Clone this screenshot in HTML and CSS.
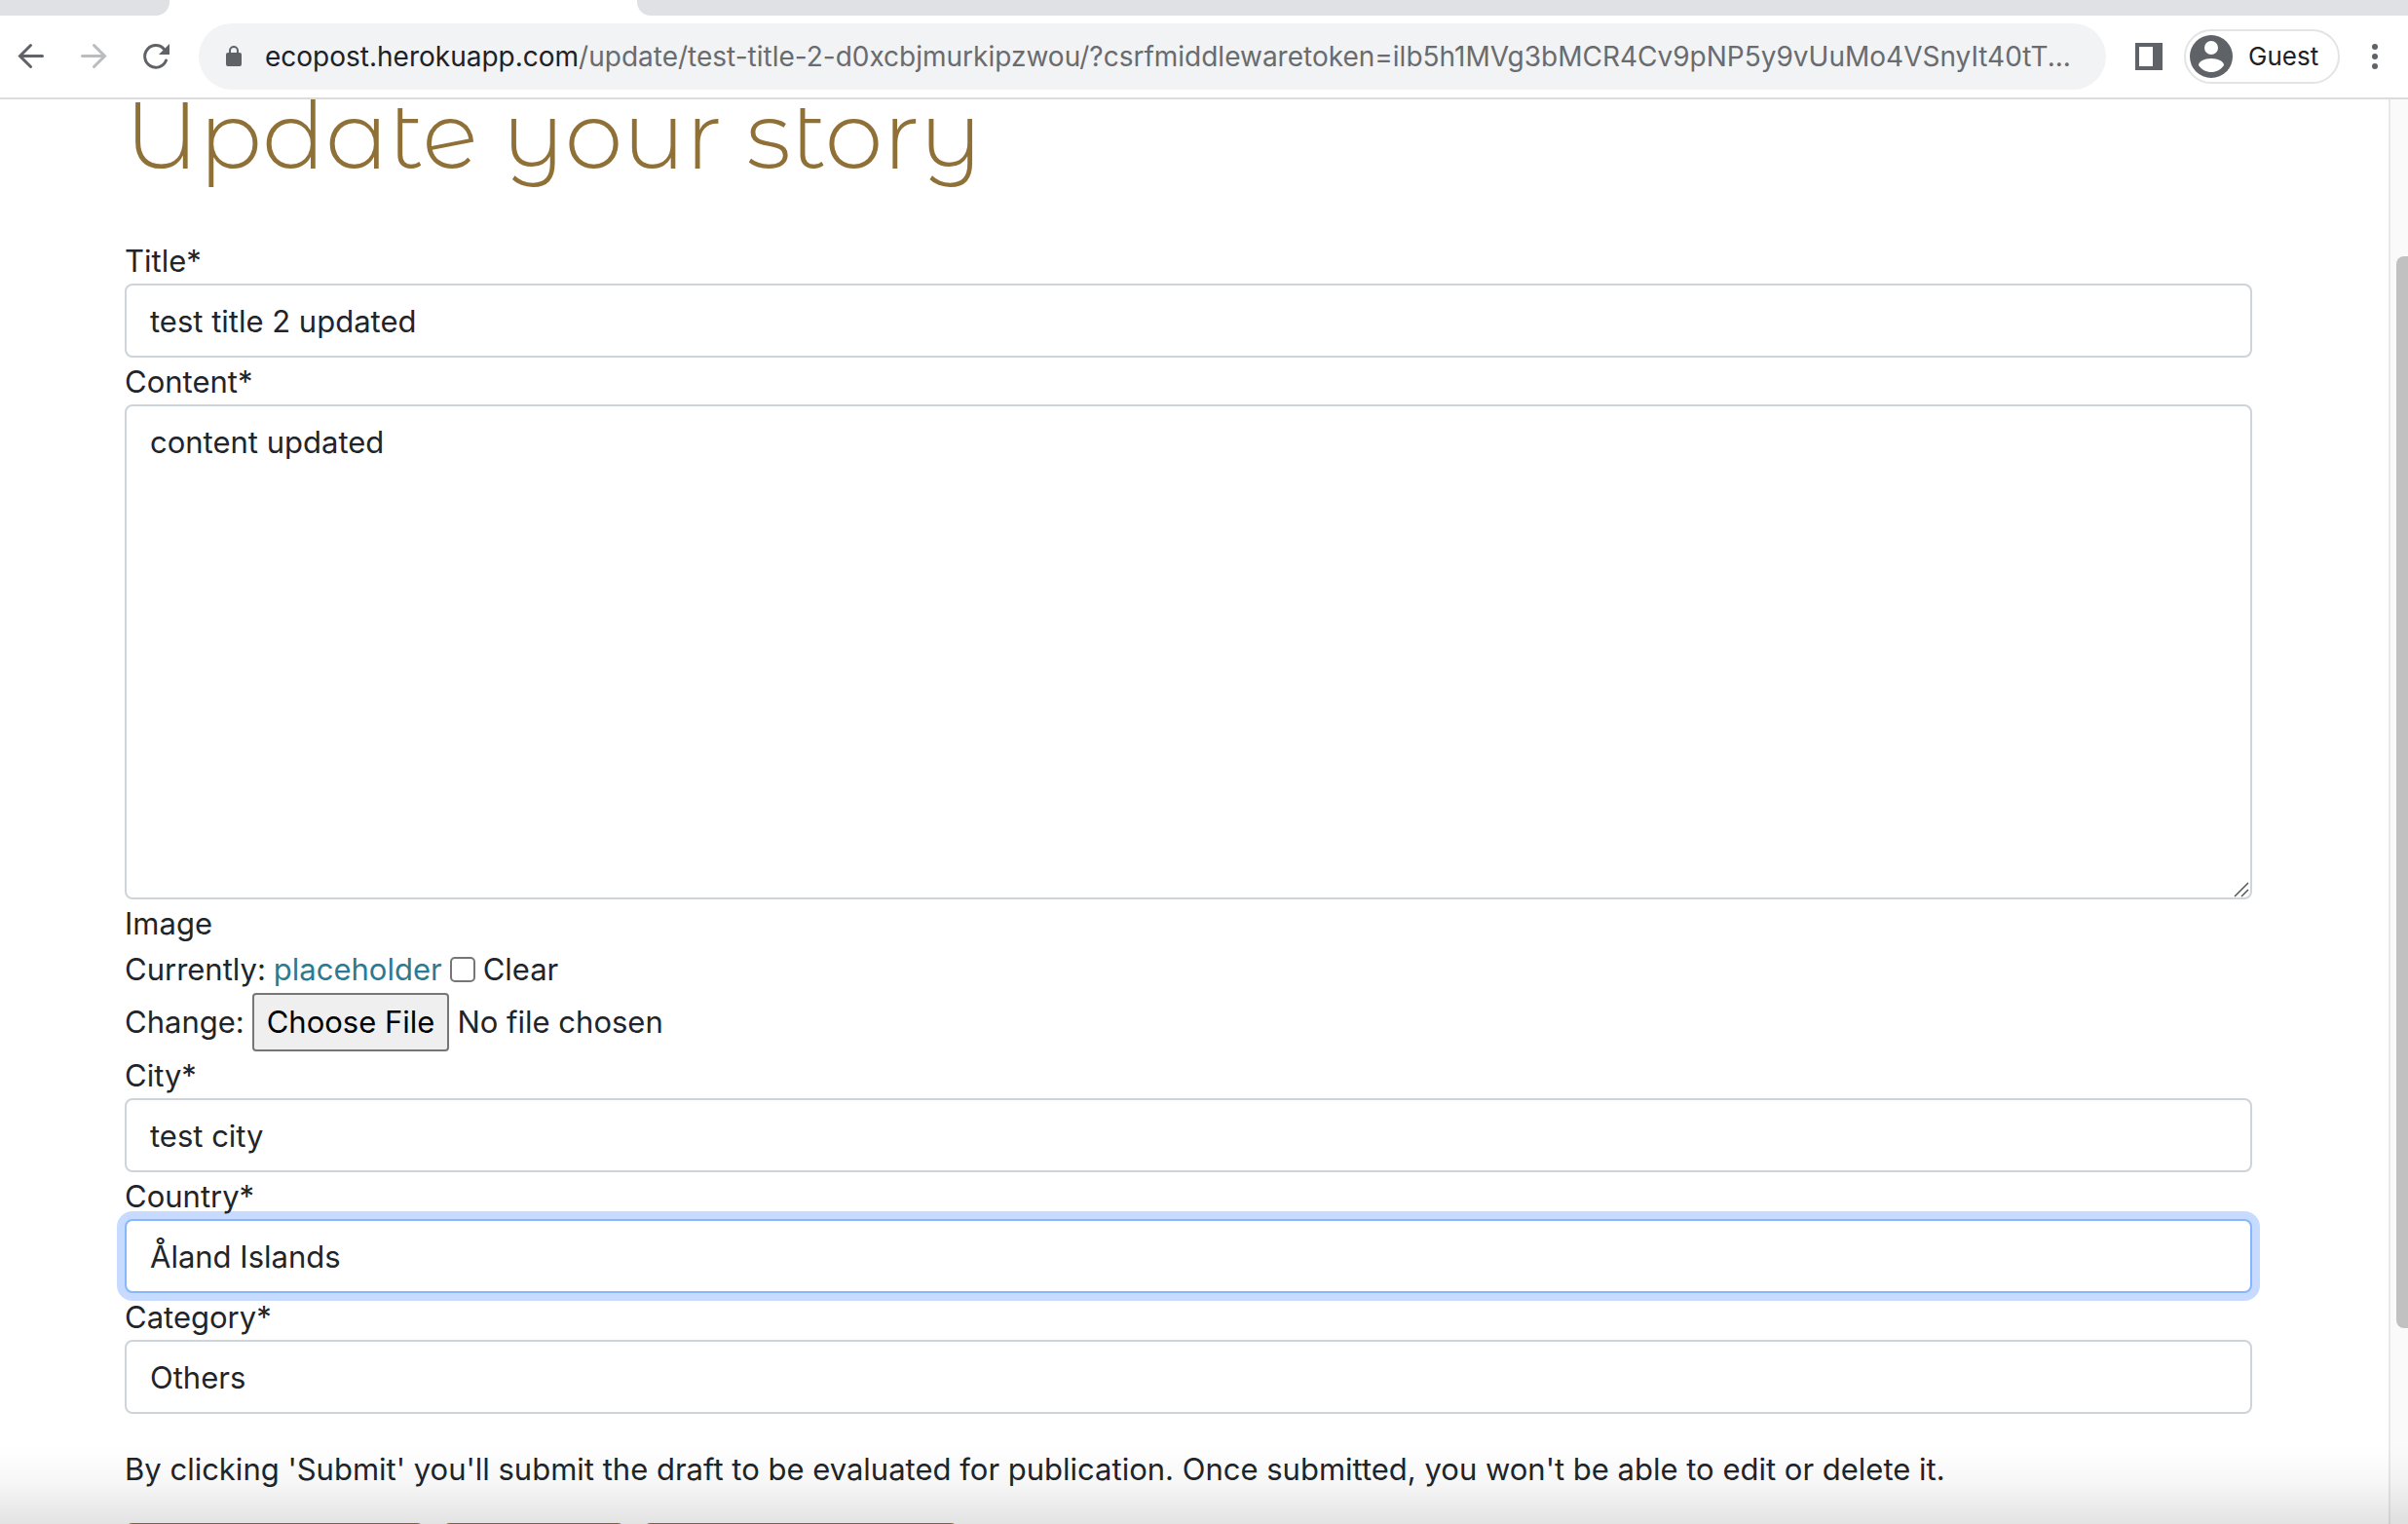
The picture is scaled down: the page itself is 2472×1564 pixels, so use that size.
FILE: index.html
```html
<!DOCTYPE html>
<html lang="en">
<head>
<meta charset="utf-8">
<title>Update your story</title>
<link rel="stylesheet" href="styles.css">
</head>
<body>
<div class="window">
  <header class="chrome">
    <div class="tabstrip"><span class="tab tab-left"></span><span class="tab tab-right"></span></div>
    <div class="toolbar">
      <nav class="nav">
        <button class="icon-button" type="button" aria-label="Back">
          <svg width="32" height="32" viewBox="0 0 32 32" fill="none" stroke="#5f6368" stroke-width="3" stroke-linecap="round"><path d="M27.500 15.500H5M15.500 4.500L4.500 15.500L15.500 26.500"/></svg>
        </button>
        <button class="icon-button" type="button" aria-label="Forward">
          <svg width="32" height="32" viewBox="0 0 32 32" fill="none" stroke="#babcbe" stroke-width="3" stroke-linecap="round"><path d="M4.500 15.500H27M16.500 4.500L27.500 15.500L16.500 26.500"/></svg>
        </button>
        <button class="icon-button" type="button" aria-label="Reload">
          <svg width="32" height="32" viewBox="0 0 32 32"><path d="M26.500 20A11.300 11.300 0 1 1 24.500 8.500" fill="none" stroke="#5f6368" stroke-width="3" stroke-linecap="round"/><path d="M30 3V14H19Z" fill="#5f6368"/></svg>
        </button>
      </nav>
      <div class="omnibox">
        <svg width="18" height="24" viewBox="0 0 18 24"><rect x="1" y="8" width="16" height="14" rx="2" fill="#5f6368"/><path d="M5 9V6a4 4 0 0 1 8 0V9" fill="none" stroke="#5f6368" stroke-width="2"/></svg>
        <span class="url"><span class="host">ecopost.herokuapp.com</span>/update/test-title-2-d0xcbjmurkipzwou/?csrfmiddlewaretoken=ilb5h1MVg3bMCR4Cv9pNP5y9vUuMo4VSnyIt40tT...</span>
      </div>
      <div class="actions">
        <button class="icon-button" type="button" aria-label="Side panel">
          <svg width="28" height="28" viewBox="0 0 28 28"><path fill="#5f6368" fill-rule="evenodd" d="M0 0H28V28H0ZM4 4V24H18V4Z"/></svg>
        </button>
        <button class="profile" type="button">
          <svg width="44" height="44" viewBox="0 0 44 44"><circle cx="22" cy="22" r="22" fill="#5f6368"/><circle cx="22" cy="13" r="7" fill="#fff"/><path d="M9 31C9 27 15 24 22 24S35 27 35 31C32 35.500 27 38 22 38S12 35.500 9 31Z" fill="#fff"/></svg>
          <span>Guest</span>
        </button>
        <button class="icon-button" type="button" aria-label="Menu">
          <svg width="8" height="28" viewBox="0 0 8 28" fill="#5f6368"><circle cx="4" cy="4" r="3"/><circle cx="4" cy="14" r="3"/><circle cx="4" cy="24" r="3"/></svg>
        </button>
      </div>
    </div>
  </header>
  <div class="viewport">
    <main class="page">
      <h1 class="heading">Update your story</h1>
      <form class="form">
        <label for="title">Title*</label>
        <input class="control" id="title" type="text" value="test title 2 updated">
        <label for="content">Content*</label>
        <div class="area">
          <textarea class="control" id="content" rows="10">content updated</textarea>
          <svg class="grip" width="16" height="16" viewBox="0 0 16 16" fill="none" stroke="#555" stroke-width="1.500"><path d="M1 15L15 1M8 15L15 8"/></svg>
        </div>
        <label for="image">Image</label>
        <div class="line">Currently: <a class="link" href="#">placeholder</a> <input class="check" id="clear" type="checkbox"> <label for="clear">Clear</label></div>
        <div class="line">Change: <input class="file" id="image" type="file"></div>
        <label for="city">City*</label>
        <input class="control" id="city" type="text" value="test city">
        <label for="country">Country*</label>
        <select class="control active" id="country"><option>Åland Islands</option></select>
        <label for="category">Category*</label>
        <select class="control" id="category"><option>Others</option></select>
        <p class="note">By clicking 'Submit' you'll submit the draft to be evaluated for publication. Once submitted, you won't be able to edit or delete it.</p>
        <div class="buttons">
          <button class="btn btn-save" type="button" aria-label="Save draft"></button>
          <button class="btn btn-submit" type="button" aria-label="Submit"></button>
          <button class="btn btn-cancel" type="button" aria-label="Cancel"></button>
        </div>
      </form>
    </main>
    <div class="scrollbar"><div class="thumb"></div></div>
    <div class="shade"></div>
  </div>
</div>
</body>
</html>
```
FILE: styles.css
```css
* { box-sizing: border-box; }
body {
  margin: 0;
  background: #fff;
  color: #212529;
  font-family: Inter, "Liberation Sans", sans-serif;
  font-size: 31px;
  line-height: 48px;
}
button, input, select, textarea { font: inherit; color: inherit; }
svg { display: block; flex: none; }

.window { display: flex; flex-direction: column; height: 100vh; overflow: hidden; }

.chrome { flex: none; border-bottom: 2px solid #dcdcdc; }
.tabstrip { display: flex; gap: 480px; height: 16px; }
.tab { background: #dfe1e5; }
.tab-left { width: 174px; border-bottom-right-radius: 14px; }
.tab-right { flex: 1; border-bottom-left-radius: 14px; }
.toolbar { display: flex; align-items: center; gap: 28px; height: 84px; padding: 0 30px 0 16px; }
.nav { display: flex; gap: 32px; }
.icon-button { padding: 0; border: 0; background: none; }
.omnibox {
  display: flex;
  flex: 1;
  align-items: center;
  gap: 23px;
  min-width: 0;
  height: 68px;
  padding: 0 28px 0 27px;
  border-radius: 34px;
  background: #f1f3f4;
}
.url { overflow: hidden; white-space: nowrap; color: #696b6e; font-size: 28px; }
.host { color: #202124; }
.actions { display: flex; align-items: center; gap: 22px; margin-left: 2px; }
.actions .icon-button:last-child { margin-left: 10px; }
.profile {
  display: flex;
  align-items: center;
  gap: 16px;
  width: 160px;
  height: 56px;
  padding: 0 4px;
  border: 2px solid #e3e4e5;
  border-radius: 28px;
  background: #fff;
  color: #202124;
  font-size: 26px;
}

.viewport { position: relative; display: flex; flex: 1; min-height: 0; overflow: hidden; }
.page { flex: 1; min-width: 0; padding: 0 140px 0 128px; }
.heading {
  margin: -20px 0 48px;
  color: #8f7037;
  font-family: "Montserrat Alternates", Inter, sans-serif;
  font-size: 96px;
  font-weight: 300;
  line-height: 113px;
  white-space: nowrap;
}
.form > label { display: block; padding-top: 2px; line-height: 46px; }
.control {
  display: block;
  width: 100%;
  padding: 13px 24px 11px;
  border: 2px solid #ced4da;
  border-radius: 8px;
  outline: 0;
  background: #fff;
  appearance: none;
  resize: none;
}
input.control, select.control { height: 76px; }
input.control { padding: 12px 24px; }
.active { border-color: #86b7fe; box-shadow: 0 0 0 8px #c7daff; }
.area { position: relative; }
.grip { position: absolute; right: 3px; bottom: 2px; }
.line { display: flex; align-items: center; gap: 8px; }
.link { color: #2c7a92; text-decoration: none; }
.check {
  width: 26px;
  height: 26px;
  margin: 0;
  border: 2px solid #767676;
  border-radius: 5px;
  background: #fff;
  appearance: none;
}
.file { height: 60px; }
.file::file-selector-button {
  height: 60px;
  margin: 0 8px 0 0;
  padding: 2px 13px;
  border: 2px solid #767676;
  border-radius: 4px;
  background: #efefef;
  color: #000;
  font: inherit;
}
.note { margin: 32px 0; padding-top: 2px; line-height: 46px; }
.buttons { display: flex; gap: 18px; }
.btn { height: 76px; border: 0; border-radius: 8px; background: #8f7037; }
.btn-save { width: 308px; }
.btn-submit { width: 188px; }
.btn-cancel { width: 324px; }

.scrollbar { flex: none; width: 20px; padding: 161px 0 0 6px; border-left: 2px solid #e8e8e8; background: #fafafa; }
.thumb { height: 1100px; border-radius: 8px 0 0 8px; background: #c1c1c1; }
.shade {
  position: absolute;
  inset: auto 0 0 0;
  height: 80px;
  background: linear-gradient(rgba(0, 0, 0, 0), rgba(0, 0, 0, .03) 45%, rgba(0, 0, 0, .11));
  pointer-events: none;
}
```
